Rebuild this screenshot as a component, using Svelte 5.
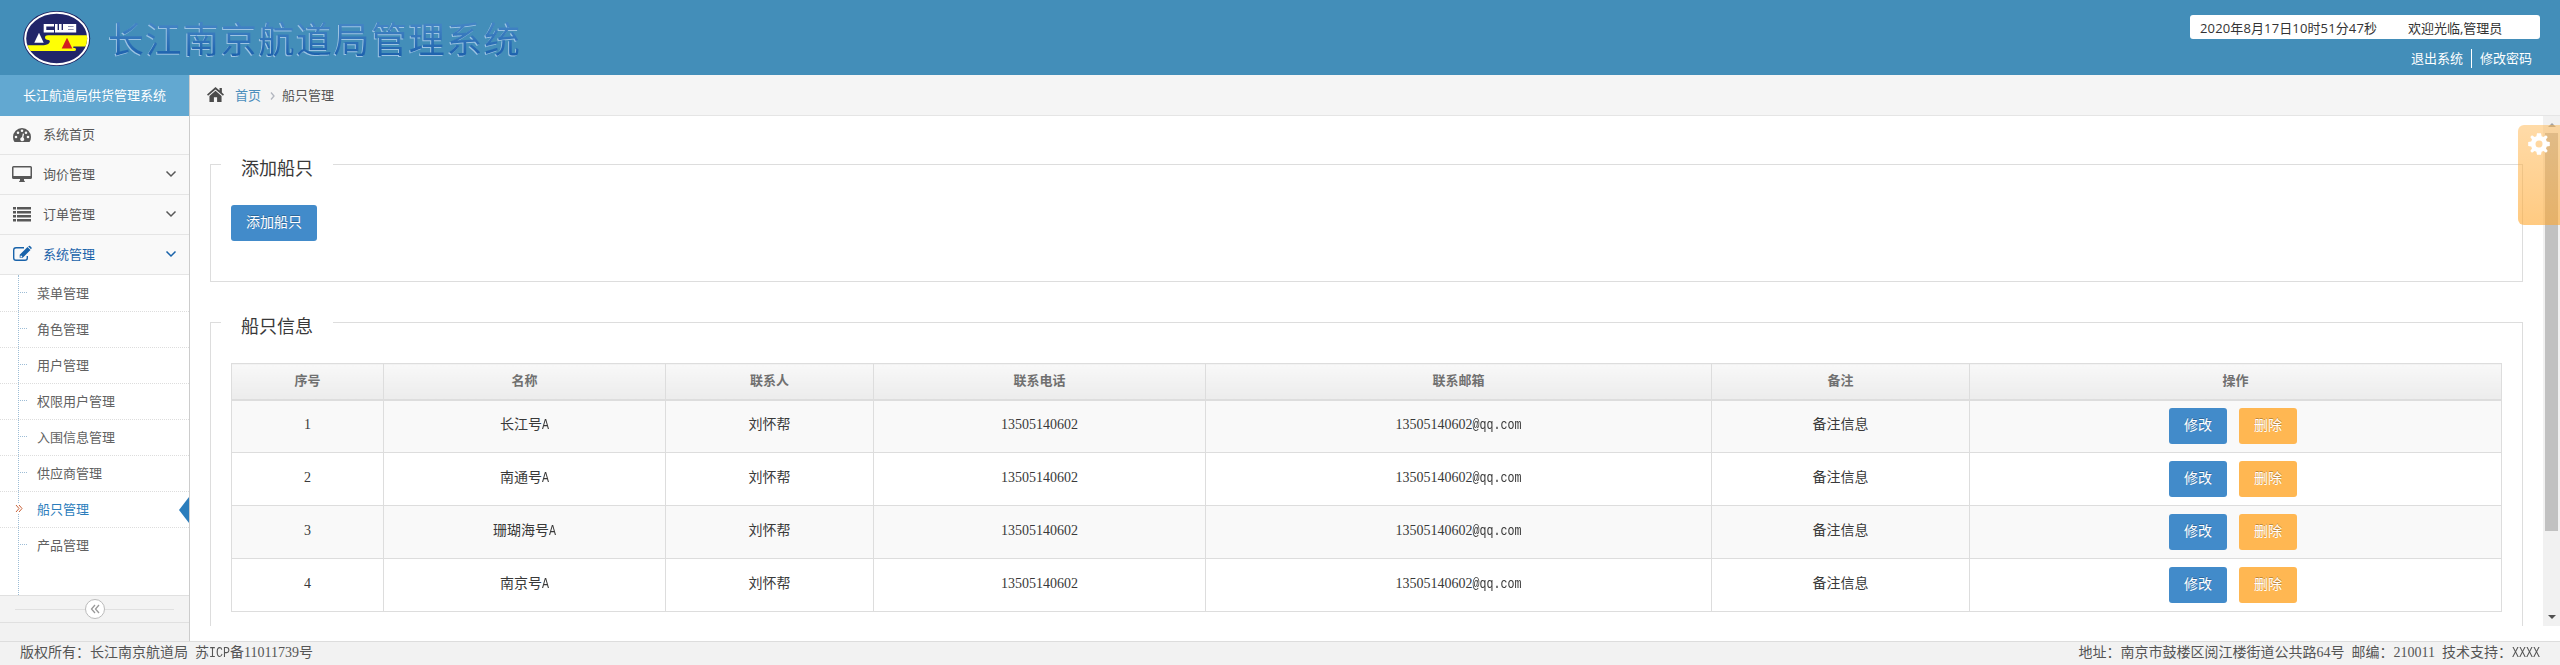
<script>
  const menu = [
    { icon: 'gauge', label: '系统首页', arrow: false },
    { icon: 'desktop', label: '询价管理', arrow: true },
    { icon: 'list', label: '订单管理', arrow: true },
    { icon: 'edit', label: '系统管理', arrow: true, open: true }
  ];
  const submenu = ['菜单管理', '角色管理', '用户管理', '权限用户管理', '入围信息管理', '供应商管理', '船只管理', '产品管理'];
  const current = '船只管理';
  const columns = ['序号', '名称', '联系人', '联系电话', '联系邮箱', '备注', '操作'];
  const ships = ['长江号A', '南通号A', '珊瑚海号A', '南京号A'];
</script>

<div class="page">
  <header class="top">
    <svg class="logo" width="68" height="56" viewBox="0 0 68 56">
      <defs><clipPath id="disc"><ellipse cx="33.700" cy="27.500" rx="30.500" ry="24.800" /></clipPath></defs>
      <ellipse cx="33.700" cy="27.500" rx="33.500" ry="27.500" fill="#1b1b5c" />
      <ellipse cx="33.700" cy="27.500" rx="31.500" ry="25.700" fill="#212569" stroke="#fff" stroke-width="2" />
      <g clip-path="url(#disc)">
        <path d="M68 24.300H25Q22 24.300 22 26.500T25.500 29Q27.500 29.500 26.500 31.500T21 34.300H0V40H51q2 0 2-1.600t-2.200-1.400q-1.500-.8 0-1.400H68z" fill="#ffff05" />
        <path d="M44 26.700L49.300 37.400H38.700z" fill="#d22020" />
        <path d="M16 21.700L20.700 31.800H11.300z" fill="#fff" />
        <path d="M31 14.300h-9v6h9M33.300 13v7.300h8V13M37.300 13v7.300M43.700 14.300h8.200v6h-8.200zM43.700 17.300h8" fill="none" stroke="#fff" stroke-width="2.600" />
      </g>
    </svg>
    <h1>长江南京航道局管理系统</h1>
    <div class="user">
      <div class="status"><span>2020年8月17日10时51分47秒</span><span>欢迎光临,管理员</span></div>
      <div class="links"><a>退出系统</a><a>修改密码</a></div>
    </div>
  </header>

  <div class="body">
    <aside>
      <div class="brand">长江航道局供货管理系统</div>
      {#each menu as item}
        <div class="item" class:open={item.open}>
          <svg class="icon" width="20" height="18" viewBox="0 0 20 18" fill="currentColor">
            {#if item.icon === 'gauge'}
              <path fill-rule="evenodd" d="M10 2a9 9 0 0 0-9 9q0 3 1.500 5h15q1.500-2 1.500-5a9 9 0 0 0-9-9zM4 9.700a1.300 1.300 0 1 1 0 2.600 1.300 1.300 0 0 1 0-2.600zM6 5.400A1.300 1.300 0 1 1 6 8a1.300 1.300 0 0 1 0-2.600zM10 3.500a1.300 1.300 0 1 1 0 2.600 1.300 1.300 0 0 1 0-2.600zM14 5.400A1.300 1.300 0 1 1 14 8a1.300 1.300 0 0 1 0-2.600zM16 9.700a1.300 1.300 0 1 1 0 2.600 1.300 1.300 0 0 1 0-2.600zM10.800 7.500l-.8 3.800a2 2 0 1 0 1.300.3l.8-3.800z" />
            {:else if item.icon === 'desktop'}
              <path fill-rule="evenodd" d="M1.500 1h17Q20 1 20 2.500v10q0 1.500-1.500 1.500H12v1.500q1 .5 1 1.500H7q0-1 1-1.500V14H1.500Q0 14 0 12.500v-10Q0 1 1.500 1zm0 1.500V11h17V2.500z" />
            {:else if item.icon === 'list'}
              <path d="M1 2h3v2.500H1zM5 2h14v2.500H5zM1 6h3v2.500H1zM5 6h14v2.500H5zM1 10h3v2.500H1zM5 10h14v2.500H5zM1 14h3v2.500H1zM5 14h14v2.500H5z" />
            {:else}
              <path d="M12 2.700H4Q1.700 2.700 1.700 5v8q0 2.300 2.300 2.300h9q2.300 0 2.300-2.300v-2" fill="none" stroke="currentColor" stroke-width="1.400" />
              <path fill-rule="evenodd" d="M15.500 2l3 3-7.800 7.800H7.700v-3zM9 10.200l1.400 1.500-.8.600H8.500v-1zM16.200 1.400l.6-.5q.7-.5 1.300.1l1.400 1.400q.6.600 0 1.200l-.5.600z" />
            {/if}
          </svg>
          <span>{item.label}</span>
          {#if item.arrow}
            <svg class="chev" width="12" height="8" viewBox="0 0 12 8"><path d="M1.500 1.500L6 6l4.500-4.500" fill="none" stroke="currentColor" stroke-width="1.500" /></svg>
          {/if}
        </div>
      {/each}
      <ul class="sub">
        {#each submenu as label}
          <li class:current={label === current}>
            {#if label === current}
              <svg class="mark" width="8" height="9" viewBox="0 0 8 9"><path d="M1 1l3 3.500L1 8M4 1l3 3.500L4 8" fill="none" stroke="#c86139" stroke-width="1" /></svg>
            {/if}
            {label}
          </li>
        {/each}
      </ul>
      <div class="collapse">
        <div class="knob"><svg width="10" height="10" viewBox="0 0 10 10"><path d="M5 1L1.500 5 5 9M9 1L5.500 5 9 9" fill="none" stroke="#999" stroke-width="1.300" /></svg></div>
      </div>
    </aside>

    <main>
      <nav>
        <svg width="17" height="15" viewBox="0 0 16 14" fill="#4c4c4c"><path d="M8 0L0 7l1 1.200L8 2.200l7 6L16 7l-2-1.800V.8h-2.200v2.500z" /><path d="M2.300 8.300L8 3.500l5.700 4.800V14H9.500V9.700h-3V14H2.300z" /></svg>
        <a>首页</a>
        <svg class="sep" width="5" height="8" viewBox="0 0 5 8"><path d="M1 .5L4 4 1 7.500" fill="none" stroke="#b2b6bf" stroke-width="1.300" /></svg>
        <span>船只管理</span>
      </nav>
      <div class="view">
        <div class="content">
          <fieldset class="add">
            <legend>添加船只</legend>
            <button>添加船只</button>
          </fieldset>
          <fieldset class="info">
            <legend>船只信息</legend>
            <table>
              <colgroup><col style="width:152px" /><col style="width:282px" /><col style="width:208px" /><col style="width:332px" /><col style="width:506px" /><col style="width:258px" /><col style="width:532px" /></colgroup>
              <thead><tr>{#each columns as c}<th>{c}</th>{/each}</tr></thead>
              <tbody>
                {#each ships as ship, i}
                  <tr>
                    <td>{i + 1}</td>
                    <td>{ship.slice(0, -1)}<span class="latin">A</span></td>
                    <td>刘怀帮</td>
                    <td>13505140602</td>
                    <td>13505140602<span class="latin">@qq.com</span></td>
                    <td>备注信息</td>
                    <td><div class="acts"><button>修改</button><button class="warn">删除</button></div></td>
                  </tr>
                {/each}
              </tbody>
            </table>
          </fieldset>
        </div>
        <div class="scroll">
          <i class="up"></i>
          <div class="thumb"></div>
          <i class="down"></i>
        </div>
      </div>
    </main>
  </div>

  <footer>
    <span>版权所有：长江南京航道局 苏<span class="latin">ICP</span>备11011739号</span>
    <span>地址：南京市鼓楼区阅江楼街道公共路64号 邮编：210011 技术支持：<span class="latin">XXXX</span></span>
  </footer>

  <div class="settings">
    <svg width="22" height="22" viewBox="-11 -11 22 22" fill="#fff">
      <path fill-rule="evenodd" d="M-2-10.800h4l.6 3 1.800.8L7-8.700 8.700-7 7-4.400l.8 1.800 3 .6v4l-3 .6L7 4.400 8.700 7 7 8.700 4.400 7l-1.800.8-.6 3h-4l-.6-3L-4.400 7-7 8.700-8.700 7-7 4.400l-.8-1.800-3-.6v-4l3-.6.8-1.800L-8.700-7-7-8.700-4.400-7l1.800-.8zM0-3.500a3.500 3.500 0 1 0 0 7 3.500 3.500 0 0 0 0-7z" />
    </svg>
  </div>
</div>

<style>
  :global(body) { margin: 0; overflow: hidden; }
  .page {
    position: relative; box-sizing: border-box; width: 2560px; height: 665px; overflow: hidden;
    display: flex; flex-direction: column; background: #fff; color: #393939;
    font: 13px/20px "Open Sans", "Noto Sans CJK SC", sans-serif;
  }
  .page :global(*) { box-sizing: border-box; }
  .top { height: 75px; background: #438eb9; display: flex; flex: none; }
  .logo { margin: 11px 0 0 23px; flex: none; }
  h1 {
    margin: 13px 0 0 17px; font: 400 36px/48px "Noto Sans CJK SC", sans-serif; letter-spacing: 1.6px; white-space: nowrap;
    background: linear-gradient(#4283c4 20%, #155aa8 80%); background-clip: text; -webkit-background-clip: text;
    color: transparent; filter: drop-shadow(-1px 1px 0 #9cc3e2);
  }
  .user { margin-left: auto; width: 370px; padding-top: 15px; }
  .status { width: 350px; height: 24px; background: #fff; border-radius: 3px; padding: 3px 10px; display: flex; color: #333; }
  .status span:first-child { width: 208px; letter-spacing: .13px; }
  .links { display: flex; justify-content: flex-end; margin: 10px 28px 0 0; color: #fff; line-height: 19px; }
  .links a + a { border-left: 1px solid #fff; padding-left: 8px; margin-left: 8px; }

  .body { height: 566px; flex: none; display: flex; }
  aside { width: 190px; border-right: 1px solid #ccc; background: #f2f2f2; flex: none; display: flex; flex-direction: column; color: #585858; }
  .brand { height: 41px; background: #62a8d1; color: #fff; font-size: 13px; line-height: 40px; padding-left: 23px; white-space: nowrap; }
  .item { height: 40px; border-bottom: 1px solid #e5e5e5; background: #f9f9f9; display: flex; align-items: center; padding: 0 12px 2px; }
  .brand + .item { height: 39px; }
  .item span { margin-left: 11px; }
  .icon { margin-top: 1px; }
  .chev { margin-left: auto; }
  .item.open { color: #1963aa; }
  .sub { list-style: none; margin: 0; padding: 0; height: 320px; background: #fff; position: relative; }
  .sub::before { content: ""; position: absolute; left: 18px; top: 0; bottom: 0; border-left: 1px dotted #9dbdd6; }
  .sub li { height: 36px; padding-left: 37px; line-height: 36px; color: #616161; position: relative; }
  .sub li + li { border-top: 1px dotted #ddd; line-height: 34px; }
  .sub li::before { content: ""; position: absolute; left: 20px; top: 17px; width: 7px; border-top: 1px dotted #9dbdd6; }
  .sub li + li::before { top: 16px; }
  .sub .current { color: #2b7dbc; }
  .sub .current::before { display: none; }
  .sub .current::after { content: ""; position: absolute; right: 0; top: 5px; border: solid transparent; border-width: 13px 10px 13px 0; border-right-color: #2b7dbc; }
  .mark { position: absolute; left: 15px; top: 12px; background: #fff; }
  .collapse { height: 28px; background: #f3f3f3; border: solid #e0e0e0; border-width: 1px 0; position: relative; display: flex; justify-content: center; align-items: center; }
  .collapse::before { content: ""; position: absolute; left: 15px; right: 15px; top: 13px; border-top: 1px solid #e0e0e0; }
  .knob { position: relative; width: 20px; height: 20px; border: 1px solid #bbb; border-radius: 50%; background: #fff; display: flex; align-items: center; justify-content: center; }

  main { flex: 1; display: flex; flex-direction: column; min-width: 0; }
  nav { height: 41px; background: #f5f5f5; border-bottom: 1px solid #e5e5e5; display: flex; align-items: center; padding: 0 0 1px 17px; color: #555; }
  nav > svg:first-child { margin-right: 11px; }
  nav a { color: #4c8fbd; }
  nav .sep { margin: 3px 7px 0 9px; }
  .view { height: 510px; display: flex; }
  .content { flex: 1; padding: 39px 20px 0; overflow: hidden; }
  fieldset { border: 1px solid #ddd; margin: 0; padding: 0 20px; min-width: 0; }
  legend { font-size: 18px; line-height: 27px; width: 112px; margin-left: -10px; padding: 0 0 0 20px; height: 19px; }
  button { height: 36px; border: 0; border-radius: 3px; background: #428bca; color: #fff; padding: 0 15px; font: 14px/34px "Open Sans", "Noto Sans CJK SC", sans-serif; text-shadow: 0 -1px 0 rgba(0, 0, 0, .25); }
  .warn { background: #ffb752; }
  .add { height: 127px; }
  .add button { margin-top: 31px; display: block; padding-bottom: 2px; }
  .info { margin-top: 31px; height: 330px; }
  table { margin-top: 31px; width: 2271px; border-collapse: collapse; table-layout: fixed; text-align: center; font: 14px/20px "Liberation Serif", "Noto Sans CJK SC", serif; }
  th { height: 36px; padding: 0 0 2px; border: 1px solid #ddd; border-bottom-width: 2px; background: linear-gradient(#f8f8f8, #ececec); color: #707070; font: bold 13px/20px "Open Sans", "Noto Sans CJK SC", sans-serif; }
  td { height: 53px; padding: 0 0 2px; border: 1px solid #ddd; }
  td:last-child { padding: 0 5px 0 0; }
  tbody tr:nth-child(odd) { background: #f9f9f9; }
  .acts { display: flex; gap: 12px; justify-content: center; }
  .acts button { padding-bottom: 2px; }
  .latin { display: inline-block; font: 11.67px/16px "Liberation Mono", monospace; transform: scaleY(1.2); transform-origin: 50% 75%; }
  .scroll { width: 17px; background: #f1f1f1; display: flex; flex-direction: column; align-items: center; }
  .scroll i { border: 4px solid transparent; width: 0; height: 0; }
  .up { border-bottom-color: #a3a3a3 !important; margin: 3px 0 6px; }
  .down { border-top-color: #505050 !important; margin: auto 0 3px; }
  .thumb { width: 13px; height: 398px; background: #c1c1c1; flex: none; }

  footer { height: 24px; flex: none; background: #f2f2f2; border-top: 1px solid #ddd; padding: 0 20px; display: flex; justify-content: space-between; font: 14px/22px "Liberation Serif", "Noto Sans CJK SC", serif; word-spacing: 3.5px; color: #555; }
  .settings { position: absolute; right: 0; top: 125px; width: 42px; height: 100px; border-radius: 6px 0 0 6px; background: linear-gradient(rgba(255, 183, 82, .5), rgba(255, 167, 46, .6)); padding: 8px 0 0 10px; }
</style>
